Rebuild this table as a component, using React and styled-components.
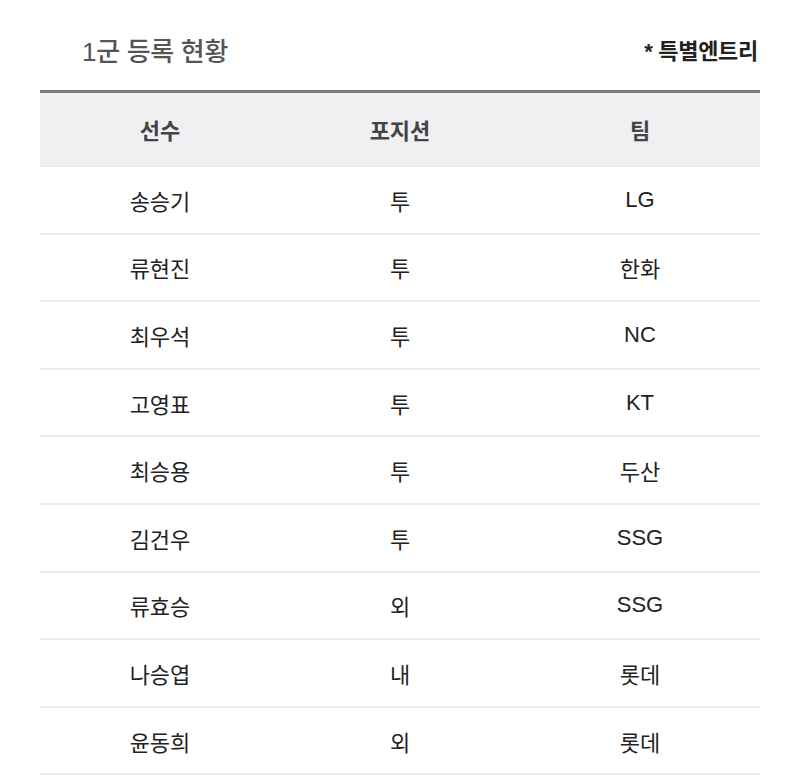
import React from "react";
import styled, { createGlobalStyle } from "styled-components";

const players = [
  { name: "송승기", pos: "투", team: "LG" },
  { name: "류현진", pos: "투", team: "한화" },
  { name: "최우석", pos: "투", team: "NC" },
  { name: "고영표", pos: "투", team: "KT" },
  { name: "최승용", pos: "투", team: "두산" },
  { name: "김건우", pos: "투", team: "SSG" },
  { name: "류효승", pos: "외", team: "SSG" },
  { name: "나승엽", pos: "내", team: "롯데" },
  { name: "윤동희", pos: "외", team: "롯데" },
];

const GlobalStyle = createGlobalStyle`
  body {
    margin: 0;
    background: #fff;
    font-family: "Liberation Sans", "Noto Sans CJK KR", sans-serif;
  }
`;

const Page = styled.div`
  padding: 20px 40px 0 40px;
  width: 720px;
`;

const Header = styled.div`
  display: flex;
  justify-content: space-between;
  align-items: center;
  height: 58px;
  padding: 0 2px 0 42px;
  margin-bottom: 12px;
`;

const Title = styled.h2`
  margin: 0;
  font-size: 26px;
  font-weight: 500;
  color: #555;
  letter-spacing: -0.3px;
`;

const Note = styled.span`
  font-size: 22px;
  font-weight: 700;
  color: #222;
  letter-spacing: -0.3px;
`;

const Table = styled.div`
  border-top: 3px solid #7a7a7a;
`;

const Row = styled.div`
  display: grid;
  grid-template-columns: repeat(3, 1fr);
  align-items: center;
  height: ${(p) => (p.head ? "72px" : "65.6px")};
  background: ${(p) => (p.head ? "#f0f0f2" : "#fff")};
  border-bottom: 2px solid #ececec;
`;

const Cell = styled.div`
  text-align: center;
  font-size: 22px;
  font-weight: ${(p) => (p.head ? 700 : 400)};
  color: ${(p) => (p.head ? "#444" : "#222")};
`;

export default function App() {
  return (
    <>
      <GlobalStyle />
      <Page>
        <Header>
          <Title>1군 등록 현황</Title>
          <Note>* 특별엔트리</Note>
        </Header>
        <Table>
          <Row head>
            <Cell head>선수</Cell>
            <Cell head>포지션</Cell>
            <Cell head>팀</Cell>
          </Row>
          {players.map((p) => (
            <Row key={p.name}>
              <Cell>{p.name}</Cell>
              <Cell>{p.pos}</Cell>
              <Cell>{p.team}</Cell>
            </Row>
          ))}
        </Table>
      </Page>
    </>
  );
}
